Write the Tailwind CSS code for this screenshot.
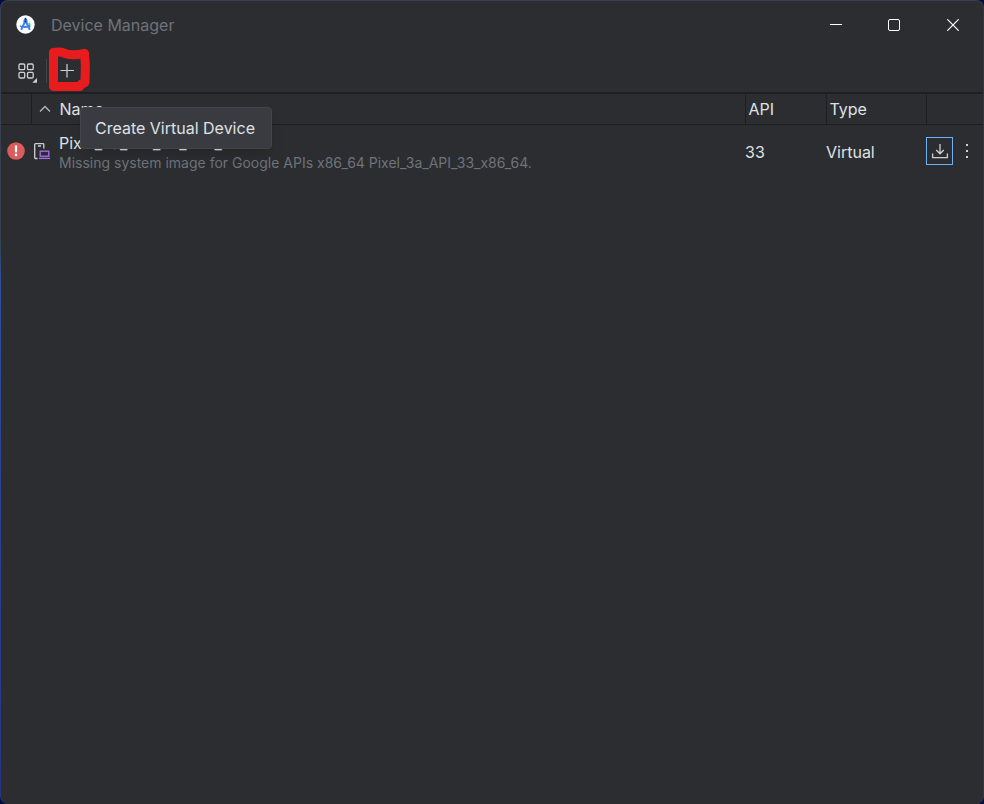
<!DOCTYPE html>
<html lang="en">
<head>
<meta charset="utf-8">
<meta name="viewport" content="width=device-width, initial-scale=1">
<title>Device Manager</title>
<script src="https://cdn.jsdelivr.net/npm/@tailwindcss/browser@4"></script>
</head>
<body class="bg-[#030d3a] font-['Inter','Liberation_Sans',sans-serif] text-base text-[#dfe1e5]">
<div class="min-h-screen flex flex-col rounded-lg bg-linear-to-b from-[#364152] from-30% via-[#2f4f9c] via-35% to-[#26357d] pt-px pl-px">
  <div class="grow flex flex-col rounded-lg border-r border-[#33363c] bg-[#2b2d30]">
    <header class="flex h-[47px] items-center pl-[15px]">
      <svg class="size-[19px] shrink-0" viewBox="0 0 19 19" aria-hidden="true">
        <circle cx="9.5" cy="9.5" r="9.2" fill="#fff"/>
        <path d="M13 8a4.500 4.500 0 0 1 .2 4.500" fill="none" stroke="#3ddc84" stroke-width="2"/>
        <path d="M9.500 5.500 5.200 14.800M9.500 5.500l4.300 9.300" fill="none" stroke="#3f83f1" stroke-width="2"/>
        <path d="M4 11q5.500 2.200 10 -.4" fill="none" stroke="#3f83f1" stroke-width="1.800"/>
        <circle cx="9.500" cy="6" r="2.200" fill="#4285f4"/>
        <circle cx="9.500" cy="6.300" r="0.900" fill="#073042"/>
        <path d="M9.500 2.800v2" stroke="#073042" stroke-width="1.600"/>
      </svg>
      <h1 class="ml-4 grow text-[#6f737a]">Device Manager</h1>
      <div class="flex h-full text-white">
        <button type="button" class="grid w-[58px] place-items-center" aria-label="Minimize"><svg class="size-3" viewBox="0 0 12 12"><path d="M0 5.500h12" stroke="currentColor"/></svg></button>
        <button type="button" class="grid w-[58px] place-items-center" aria-label="Maximize"><svg class="size-3" viewBox="0 0 12 12"><rect x=".5" y=".5" width="11" height="11" rx="1.500" fill="none" stroke="currentColor"/></svg></button>
        <button type="button" class="grid w-[60px] place-items-center" aria-label="Close"><svg class="size-3" viewBox="0 0 12 12"><path d="M.3.3l11.400 11.400M11.700.3.3 11.700" stroke="currentColor" stroke-width="1.200"/></svg></button>
      </div>
    </header>
    <div class="flex h-11 items-center pl-4 pt-0.5" role="toolbar" aria-label="Devices">
      <button type="button" class="h-6 w-5 shrink-0" aria-label="Group by">
        <svg class="h-6 w-5" viewBox="0 0 20 24" fill="none" stroke="#ced0d6" stroke-width="1.300">
          <rect x="2" y="5" width="5.700" height="5.700" rx="1.200"/><rect x="10.500" y="5" width="5.700" height="5.700" rx="1.200"/>
          <rect x="2" y="13.300" width="5.700" height="5.700" rx="1.200"/><rect x="10.500" y="13.300" width="5.700" height="5.700" rx="1.200"/>
          <path d="M20 19v4.700h-4.700z" fill="#ced0d6" stroke="none"/>
        </svg>
      </button>
      <span class="ml-[9px] h-6 w-px bg-[#43454a]"></span>
      <div class="relative size-11 shrink-0">
        <svg class="absolute inset-0 size-11 pointer-events-none" viewBox="0 1 44 44" overflow="visible" aria-hidden="true">
          <path d="M6.500 4.500Q10 3.800 15 4.200C21 7.500 30 7 37.500 5.300L38.300 16 38 34.500 34.500 36 33 38.500H6.500Z" fill="none" stroke="#e81c1c" stroke-width="9" stroke-linejoin="round"/>
        </svg>
        <button type="button" class="relative grid size-11 place-items-center" aria-label="Create Virtual Device" aria-describedby="tip">
          <svg class="size-6" viewBox="0 0 24 24"><path d="M3.500 11.500h13.500M10 5v13.500" stroke="#ced0d6" stroke-width="1.200"/></svg>
        </button>
        <div id="tip" role="tooltip" class="absolute left-[33px] top-[58px] z-10 flex h-[42px] min-w-48 items-center whitespace-nowrap rounded border border-[#43454a] bg-[#393b40] px-3.5 shadow-lg">Create Virtual Device</div>
      </div>
    </div>
    <table class="w-full table-fixed border-t-2 border-[#1e1f22] text-left">
      <colgroup><col class="w-[30px]"><col><col class="w-[81px]"><col class="w-[100px]"><col class="w-[57px]"></colgroup>
      <thead>
        <tr class="h-[31px] border-b border-[#1e1f22]">
          <th aria-label="Status"></th>
          <th class="border-l border-[#1e1f22] font-normal" aria-sort="ascending">
            <div class="flex items-center gap-[9px] pl-[7px]">
              <svg class="h-3 w-3" viewBox="0 0 12 12" fill="none" stroke="#b4b8bf" stroke-width="1.300" aria-hidden="true"><path d="M1 8.500 6 3.500l5 5"/></svg>Name
            </div>
          </th>
          <th class="border-l border-[#1e1f22] pl-[3px] font-normal">API</th>
          <th class="border-l border-[#1e1f22] pl-[3px] font-normal">Type</th>
          <th class="border-l border-[#1e1f22]" aria-label="Actions"></th>
        </tr>
      </thead>
      <tbody>
        <tr class="h-[54px]">
          <td class="pl-1.5">
            <svg class="size-[18px]" viewBox="0 0 18 18" role="img" aria-label="Error"><circle cx="9" cy="9" r="8.800" fill="#db5c5c"/><path d="M9 4.300v5.200" stroke="#fff" stroke-width="2.200" stroke-linecap="round"/><circle cx="9" cy="12.900" r="1.300" fill="#fff"/></svg>
          </td>
          <td>
            <div class="flex items-center gap-[9px] pl-[3px]">
              <svg class="h-5 w-4 shrink-0" viewBox="0 0 16 20" fill="none" stroke-width="1.300" role="img" aria-label="Phone">
                <path d="M3.500 17.500h-2a.8.800 0 0 1-.8-.8V3.500a.8.800 0 0 1 .8-.8h7.500a.8.800 0 0 1 .8.800v4M4 5h3" stroke="#ced0d6"/>
                <rect x="6.200" y="10.200" width="8.600" height="5" stroke="#a571e6" fill="#2f2936"/><path d="M5 17.400h11" stroke="#a571e6"/>
              </svg>
              <div class="whitespace-nowrap pt-1">
                <div class="leading-5">Pixel_3a_API_33_x86_64</div>
                <div class="text-sm leading-5 text-[#6f737a]">Missing system image for Google APIs x86_64 Pixel_3a_API_33_x86_64.</div>
              </div>
            </div>
          </td>
          <td class="pt-0.5">33</td>
          <td class="pt-0.5">Virtual</td>
          <td>
            <div class="flex items-center">
              <button type="button" class="grid h-7 w-[27px] place-items-center border border-[#6cb2f5]" aria-label="Download system image">
                <svg class="size-5" viewBox="0 0 20 20" fill="none" stroke="#ced0d6" stroke-width="1.300"><path d="M10 3v9.500M6.200 9l3.800 3.800L13.800 9M2.600 12.500v4.200h14.800v-4.200"/></svg>
              </button>
              <button type="button" class="grid h-7 w-[27px] place-items-center" aria-label="More actions">
                <svg class="h-5 w-1" viewBox="0 0 4 20" fill="#ced0d6"><rect x="1" y="3" width="2" height="2"/><rect x="1" y="9" width="2" height="2"/><rect x="1" y="15" width="2" height="2"/></svg>
              </button>
            </div>
          </td>
        </tr>
      </tbody>
    </table>
  </div>
</div>
</body>
</html>
